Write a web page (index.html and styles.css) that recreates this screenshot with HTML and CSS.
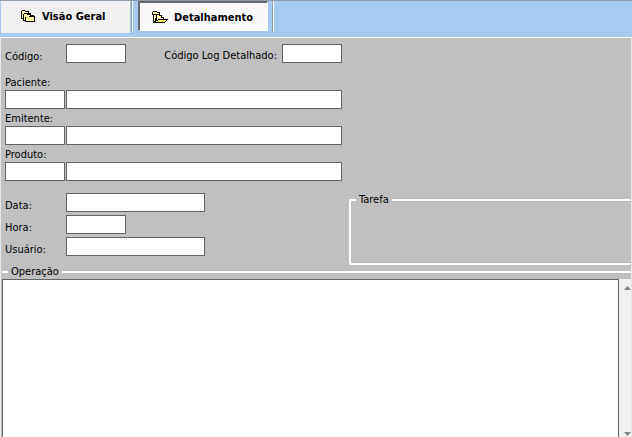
FILE: index.html
```html
<!DOCTYPE html>
<html lang="pt-BR">
<head>
<meta charset="utf-8">
<title>Detalhamento</title>
<link rel="stylesheet" href="styles.css">
</head>
<body>
<nav class="toolbar">
  <button type="button" class="tab">
    <svg class="icon" width="16" height="16" viewBox="0 0 16 16" shape-rendering="crispEdges">
      <path d="M1 2H2V1H5V2H9V4H11V6H14V7H15V13H5V12H3V10H1Z" fill="#000"/>
      <path d="M2 2H5V3H8V4H4V5H3V9H2Z" fill="#fff9a0"/>
      <path d="M4 5H7V6H10V7H6V8H5V11H4Z" fill="#fff9a0"/>
      <path d="M6 7H9V8H14V12H6Z" fill="#fff9a0"/>
    </svg>
    <span>Visão Geral</span>
  </button>
  <span class="separator"></span>
  <button type="button" class="tab pressed" aria-pressed="true">
    <svg class="icon" width="16" height="16" viewBox="0 0 16 16" shape-rendering="crispEdges">
      <path d="M0 2H1V1H5V2H8V5H10V7H12V9H16V10H15V11H14V12H13V13H1V5H0Z" fill="#000"/>
      <path d="M1 2H5V3H7V4H1Z" fill="#fff9a0"/>
      <path d="M2 5H4V8H3V11H2Z" fill="#fff9a0"/>
      <path d="M5 5H7V6H9V8H11V9H6V10H5Z" fill="#fff9a0"/>
      <path d="M6 10H14V11H13V12H4V11H6Z" fill="#f3e65e"/>
    </svg>
    <span>Detalhamento</span>
  </button>
  <span class="separator"></span>
</nav>
<main class="panel">
  <div class="details">
    <form class="form">
      <div class="row first">
        <label class="side" for="codigo">Código:</label>
        <input class="short" id="codigo" type="text">
        <label class="log" for="log">Código Log Detalhado:</label>
        <input class="short" id="log" type="text">
      </div>
      <div class="group">
        <label for="paciente">Paciente:</label>
        <div class="pair"><input class="short" id="paciente" type="text"><input class="wide" type="text" aria-label="Nome do paciente"></div>
      </div>
      <div class="group">
        <label for="emitente">Emitente:</label>
        <div class="pair"><input class="short" id="emitente" type="text"><input class="wide" type="text" aria-label="Nome do emitente"></div>
      </div>
      <div class="group">
        <label for="produto">Produto:</label>
        <div class="pair"><input class="short" id="produto" type="text"><input class="wide" type="text" aria-label="Nome do produto"></div>
      </div>
      <div class="stack">
        <div class="row"><label class="side" for="data">Data:</label><input class="medium" id="data" type="text"></div>
        <div class="row"><label class="side" for="hora">Hora:</label><input class="short" id="hora" type="text"></div>
        <div class="row"><label class="side" for="usuario">Usuário:</label><input class="medium" id="usuario" type="text"></div>
      </div>
    </form>
    <fieldset class="task"><legend>Tarefa</legend></fieldset>
  </div>
  <section class="operation">
    <label class="caption" for="operacao">Operação</label>
    <div class="memo">
      <textarea id="operacao"></textarea>
      <div class="scrollbar">
        <button type="button" aria-label="Rolar para cima"><svg width="7" height="4" viewBox="0 0 7 4"><path d="M0 4L3.500 0L7 4Z" fill="#858585"/></svg></button>
        <button type="button" aria-label="Rolar para baixo"><svg width="7" height="4" viewBox="0 0 7 4"><path d="M0 0H7L3.500 4Z" fill="#858585"/></svg></button>
      </div>
    </div>
  </section>
</main>
</body>
</html>
```
FILE: styles.css
```css
* { box-sizing: border-box; }

body {
  margin: 0;
  min-height: 100vh;
  display: flex;
  flex-direction: column;
  background: #c0c0c0;
  color: #000;
  font: 11px/12px "DejaVu Sans Condensed", Tahoma, sans-serif;
}

button, input, textarea {
  margin: 0;
  padding: 0;
  border: 0;
  border-radius: 0;
  font: inherit;
  color: inherit;
}

.toolbar {
  display: flex;
  align-items: flex-start;
  height: 38px;
  padding-left: 1px;
  background: #a6caf0;
  border-top: 1px solid #8e9cab;
  border-bottom: 1px solid #fff;
}

.tab {
  display: flex;
  align-items: center;
  gap: 6px;
  width: 129px;
  height: 32px;
  margin-right: 1px;
  padding: 0 0 1px 19px;
  background: #f0f0f0;
  font-weight: bold;
}

.tab.pressed {
  width: 130px;
  height: 30px;
  margin: 0 4px 0 5px;
  padding: 2px 0 0 12px;
  background: repeating-conic-gradient(#fff 0 25%, #f3f3f3 0 50%) 0 0 / 2px 2px;
  border: 1px solid #fff;
  border-top: 2px solid #696969;
  border-left: 2px solid #696969;
}

.separator {
  width: 2px;
  height: 31px;
  border-left: 1px solid #909aa6;
  border-right: 1px solid #fff;
}

.panel {
  flex: 1;
  display: flex;
  flex-direction: column;
  border-left: 1px solid #e4e8ec;
  border-right: 1px solid #e8e8e8;
}

.details {
  display: flex;
  align-items: flex-end;
  gap: 7px;
}

.form {
  width: 341px;
  padding: 6px 0 9px 4px;
}

.form input {
  height: 19px;
  border: 1px solid #646464;
  background: #fff;
}

.form .short { width: 60px; }
.form .medium { width: 139px; }
.form .wide { flex: 1; min-width: 0; }

.row {
  display: flex;
  align-items: flex-end;
}

.side { width: 61px; }

.log {
  flex: 1;
  padding-right: 5px;
  padding-bottom: 1px;
  text-align: right;
}

.first { margin-bottom: 10px; }

.group {
  display: flex;
  flex-direction: column;
  padding-top: 4px;
}

.group label { padding-bottom: 1px; }

.pair {
  display: flex;
  gap: 1px;
}

.stack {
  display: grid;
  gap: 3px;
  margin-top: 12px;
}

.task {
  flex: 1;
  min-width: 0;
  height: 71px;
  margin: 0;
  padding: 0;
  border: 2px solid #fff;
  border-right: 0;
  border-radius: 2px;
}

.task legend {
  margin-left: 5px;
  padding: 0 3px;
}

.operation {
  flex: 1;
  display: flex;
  flex-direction: column;
  padding-left: 1px;
}

.caption {
  display: flex;
  align-items: center;
  gap: 3px;
  height: 14px;
}

.caption::before,
.caption::after {
  content: "";
  width: 6px;
  height: 2px;
  background: #fff;
}

.caption::after { flex: 1; }

.memo {
  flex: 1;
  display: flex;
}

.memo textarea {
  flex: 1;
  min-width: 0;
  resize: none;
  background: #fff;
  border: 1px solid #646464;
  border-bottom: 0;
  outline: 0;
}

.scrollbar {
  width: 12px;
  display: flex;
  flex-direction: column;
  justify-content: space-between;
  background: #f0f0f0;
}

.scrollbar button {
  display: flex;
  justify-content: flex-end;
  align-items: flex-end;
  height: 12px;
  padding-bottom: 1px;
  background: transparent;
}
```
